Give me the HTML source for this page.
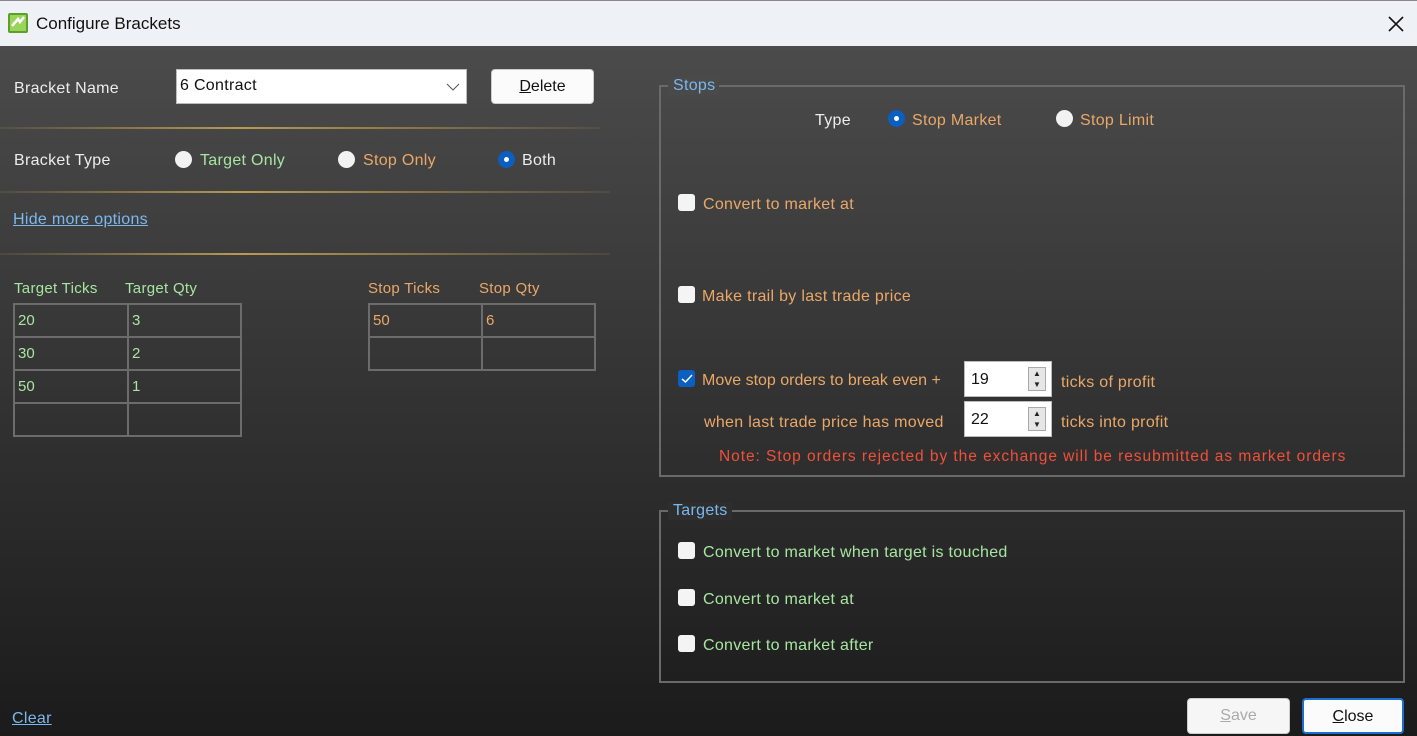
<!DOCTYPE html>
<html><head><meta charset="utf-8"><style>
*{margin:0;padding:0;box-sizing:border-box}
body{width:1417px;height:736px;overflow:hidden;font-family:"Liberation Sans","DejaVu Sans",sans-serif;font-size:16px;position:relative;background:#2a2a2a}
.tb{position:absolute;left:0;top:0;width:1417px;height:46px;background:#eef2f6;border-top:1px solid #888}
.main{position:absolute;left:0;top:46px;width:1417px;height:690px;background:linear-gradient(#4b4b4b,#1b1b1b)}
.t{position:absolute;line-height:18px;white-space:nowrap;margin-top:1px;letter-spacing:0.3px}
.w{color:#ececec}.g{color:#a6e6a0}.o{color:#eaa868}.b{color:#7ab8ee}.r{color:#f0503a}
.rad{position:absolute;width:17px;height:17px;border-radius:50%;background:#f2f2f2}
.rad.on{background:#0a5fc0}.rad.on::after{content:"";position:absolute;left:6px;top:6px;width:5px;height:5px;border-radius:50%;background:#fff}
.cb{position:absolute;width:17px;height:17px;border-radius:3px;background:#f4f4f4}
.cb.on{background:#0a5fc0}
.line{position:absolute;left:0;height:2px;background:linear-gradient(90deg,rgba(200,170,80,.1),#b89a50 40%,rgba(200,170,80,.1))}
table{position:absolute;border-collapse:collapse}
td{border:2px solid #6c6c6c;height:33px;font-size:15px;padding:0 3px;vertical-align:middle}
.box{position:absolute;border:2px solid #6a6a6a}
.btn{position:absolute;background:#fbfbfb;border:1px solid #ccc;border-radius:4px;text-align:center;color:#111;font-size:16px}
.spin{position:absolute;width:88px;height:36px;background:#fff;border:1px solid #bbb}
.spin span{position:absolute;left:6px;top:9px;color:#111;font-size:16px}
.spin i{position:absolute;right:5px;top:5px;width:18px;height:24px;background:#e6e6e6;border:1px solid #aaa;font-style:normal;font-size:8px;line-height:11px;text-align:center;color:#222}
</style></head><body>
<div class="tb">
<svg style="position:absolute;left:7px;top:11px" width="22" height="22" viewBox="0 0 22 22"><rect x="1" y="1" width="20" height="20" rx="2" fill="#5aa02a"/><rect x="3" y="3" width="16" height="16" fill="#9ad45a"/><path d="M5 14 L11 7 L13 10 L17 5" stroke="#fff" stroke-width="2.5" fill="none"/></svg>
<div class="t" style="left:36px;top:13px;color:#111;font-size:17px;letter-spacing:0">Configure Brackets</div>
<svg style="position:absolute;left:1387px;top:14px" width="18" height="18"><path d="M2 2L16 16M16 2L2 16" stroke="#111" stroke-width="1.6"/></svg>
</div>
<div class="main"></div>
<div class="t w" style="left:14px;top:79px">Bracket Name</div>
<div style="position:absolute;left:176px;top:69px;width:291px;height:35px;background:#fff;border:1px solid #bbb"></div>
<div class="t" style="left:180px;top:76px;color:#111">6 Contract</div>
<svg style="position:absolute;left:446px;top:82px" width="14" height="10"><path d="M1 2L7 8L13 2" stroke="#555" fill="none"/></svg>
<div class="btn" style="left:491px;top:69px;width:103px;height:35px;line-height:34px"><u>D</u>elete</div>
<div class="line" style="top:127px;width:600px"></div>
<div class="t w" style="left:14px;top:151px">Bracket Type</div>
<div class="rad" style="left:175px;top:151px"></div><div class="t g" style="left:200px;top:151px">Target Only</div>
<div class="rad" style="left:338px;top:151px"></div><div class="t o" style="left:363px;top:151px">Stop Only</div>
<div class="rad on" style="left:498px;top:151px"></div><div class="t w" style="left:522px;top:151px">Both</div>
<div class="line" style="top:191px;width:610px"></div>
<div class="t b" style="left:13px;top:210px;text-decoration:underline">Hide more options</div>
<div class="line" style="top:253px;width:610px"></div>
<div class="t g" style="left:14px;top:279px;font-size:15px">Target Ticks</div>
<div class="t g" style="left:125px;top:279px;font-size:15px">Target Qty</div>
<div class="t o" style="left:368px;top:279px;font-size:15px">Stop Ticks</div>
<div class="t o" style="left:479px;top:279px;font-size:15px">Stop Qty</div>
<table class="g" style="left:13px;top:303px;width:229px"><tr><td style="width:114px">20</td><td>3</td></tr><tr><td>30</td><td>2</td></tr><tr><td>50</td><td>1</td></tr><tr><td></td><td></td></tr></table>
<table class="o" style="left:368px;top:303px;width:228px"><tr><td style="width:113px">50</td><td>6</td></tr><tr><td></td><td></td></tr></table>
<div class="t b" style="left:12px;top:709px;text-decoration:underline">Clear</div>

<div class="box" style="left:659px;top:85px;width:746px;height:392px"></div>
<div class="t b" style="left:668px;top:76px;background:#4a4a4a;padding:0 4px 0 5px">Stops</div>
<div class="t w" style="left:815px;top:111px">Type</div>
<div class="rad on" style="left:888px;top:110px"></div><div class="t o" style="left:912px;top:111px">Stop Market</div>
<div class="rad" style="left:1056px;top:110px"></div><div class="t o" style="left:1080px;top:111px">Stop Limit</div>
<div class="cb" style="left:678px;top:194px"></div><div class="t o" style="left:703px;top:195px">Convert to market at</div>
<div class="cb" style="left:678px;top:286px"></div><div class="t o" style="left:702px;top:287px">Make trail by last trade price</div>
<div class="cb on" style="left:678px;top:370px"></div>
<svg style="position:absolute;left:681px;top:374px" width="12" height="10"><path d="M1 5L4.5 8L11 1" stroke="#fff" stroke-width="1.5" fill="none"/></svg>
<div class="t o" style="left:702px;top:371px;letter-spacing:0">Move stop orders to break even +</div>
<div class="spin" style="left:964px;top:361px"><span>19</span><i>▲<br>▼</i></div>
<div class="t o" style="left:1061px;top:373px">ticks of profit</div>
<div class="t o" style="left:704px;top:413px">when last trade price has moved</div>
<div class="spin" style="left:964px;top:401px"><span>22</span><i>▲<br>▼</i></div>
<div class="t o" style="left:1061px;top:413px">ticks into profit</div>
<div class="t r" style="left:719px;top:447px;font-size:15.5px;letter-spacing:0.95px">Note: Stop orders rejected by the exchange will be resubmitted as market orders</div>

<div class="box" style="left:659px;top:510px;width:746px;height:173px"></div>
<div class="t b" style="left:668px;top:501px;background:#2e2e2e;padding:0 4px 0 5px">Targets</div>
<div class="cb" style="left:678px;top:542px"></div><div class="t g" style="left:703px;top:543px">Convert to market when target is touched</div>
<div class="cb" style="left:678px;top:589px"></div><div class="t g" style="left:703px;top:590px">Convert to market at</div>
<div class="cb" style="left:678px;top:635px"></div><div class="t g" style="left:703px;top:636px">Convert to market after</div>

<div class="btn" style="left:1187px;top:698px;width:103px;height:36px;line-height:34px;color:#aaa;background:#f6f6f6"><u>S</u>ave</div>
<div class="btn" style="left:1302px;top:698px;width:102px;height:36px;line-height:33px;border:2px solid #1a6fd0"><u>C</u>lose</div>
</body></html>
